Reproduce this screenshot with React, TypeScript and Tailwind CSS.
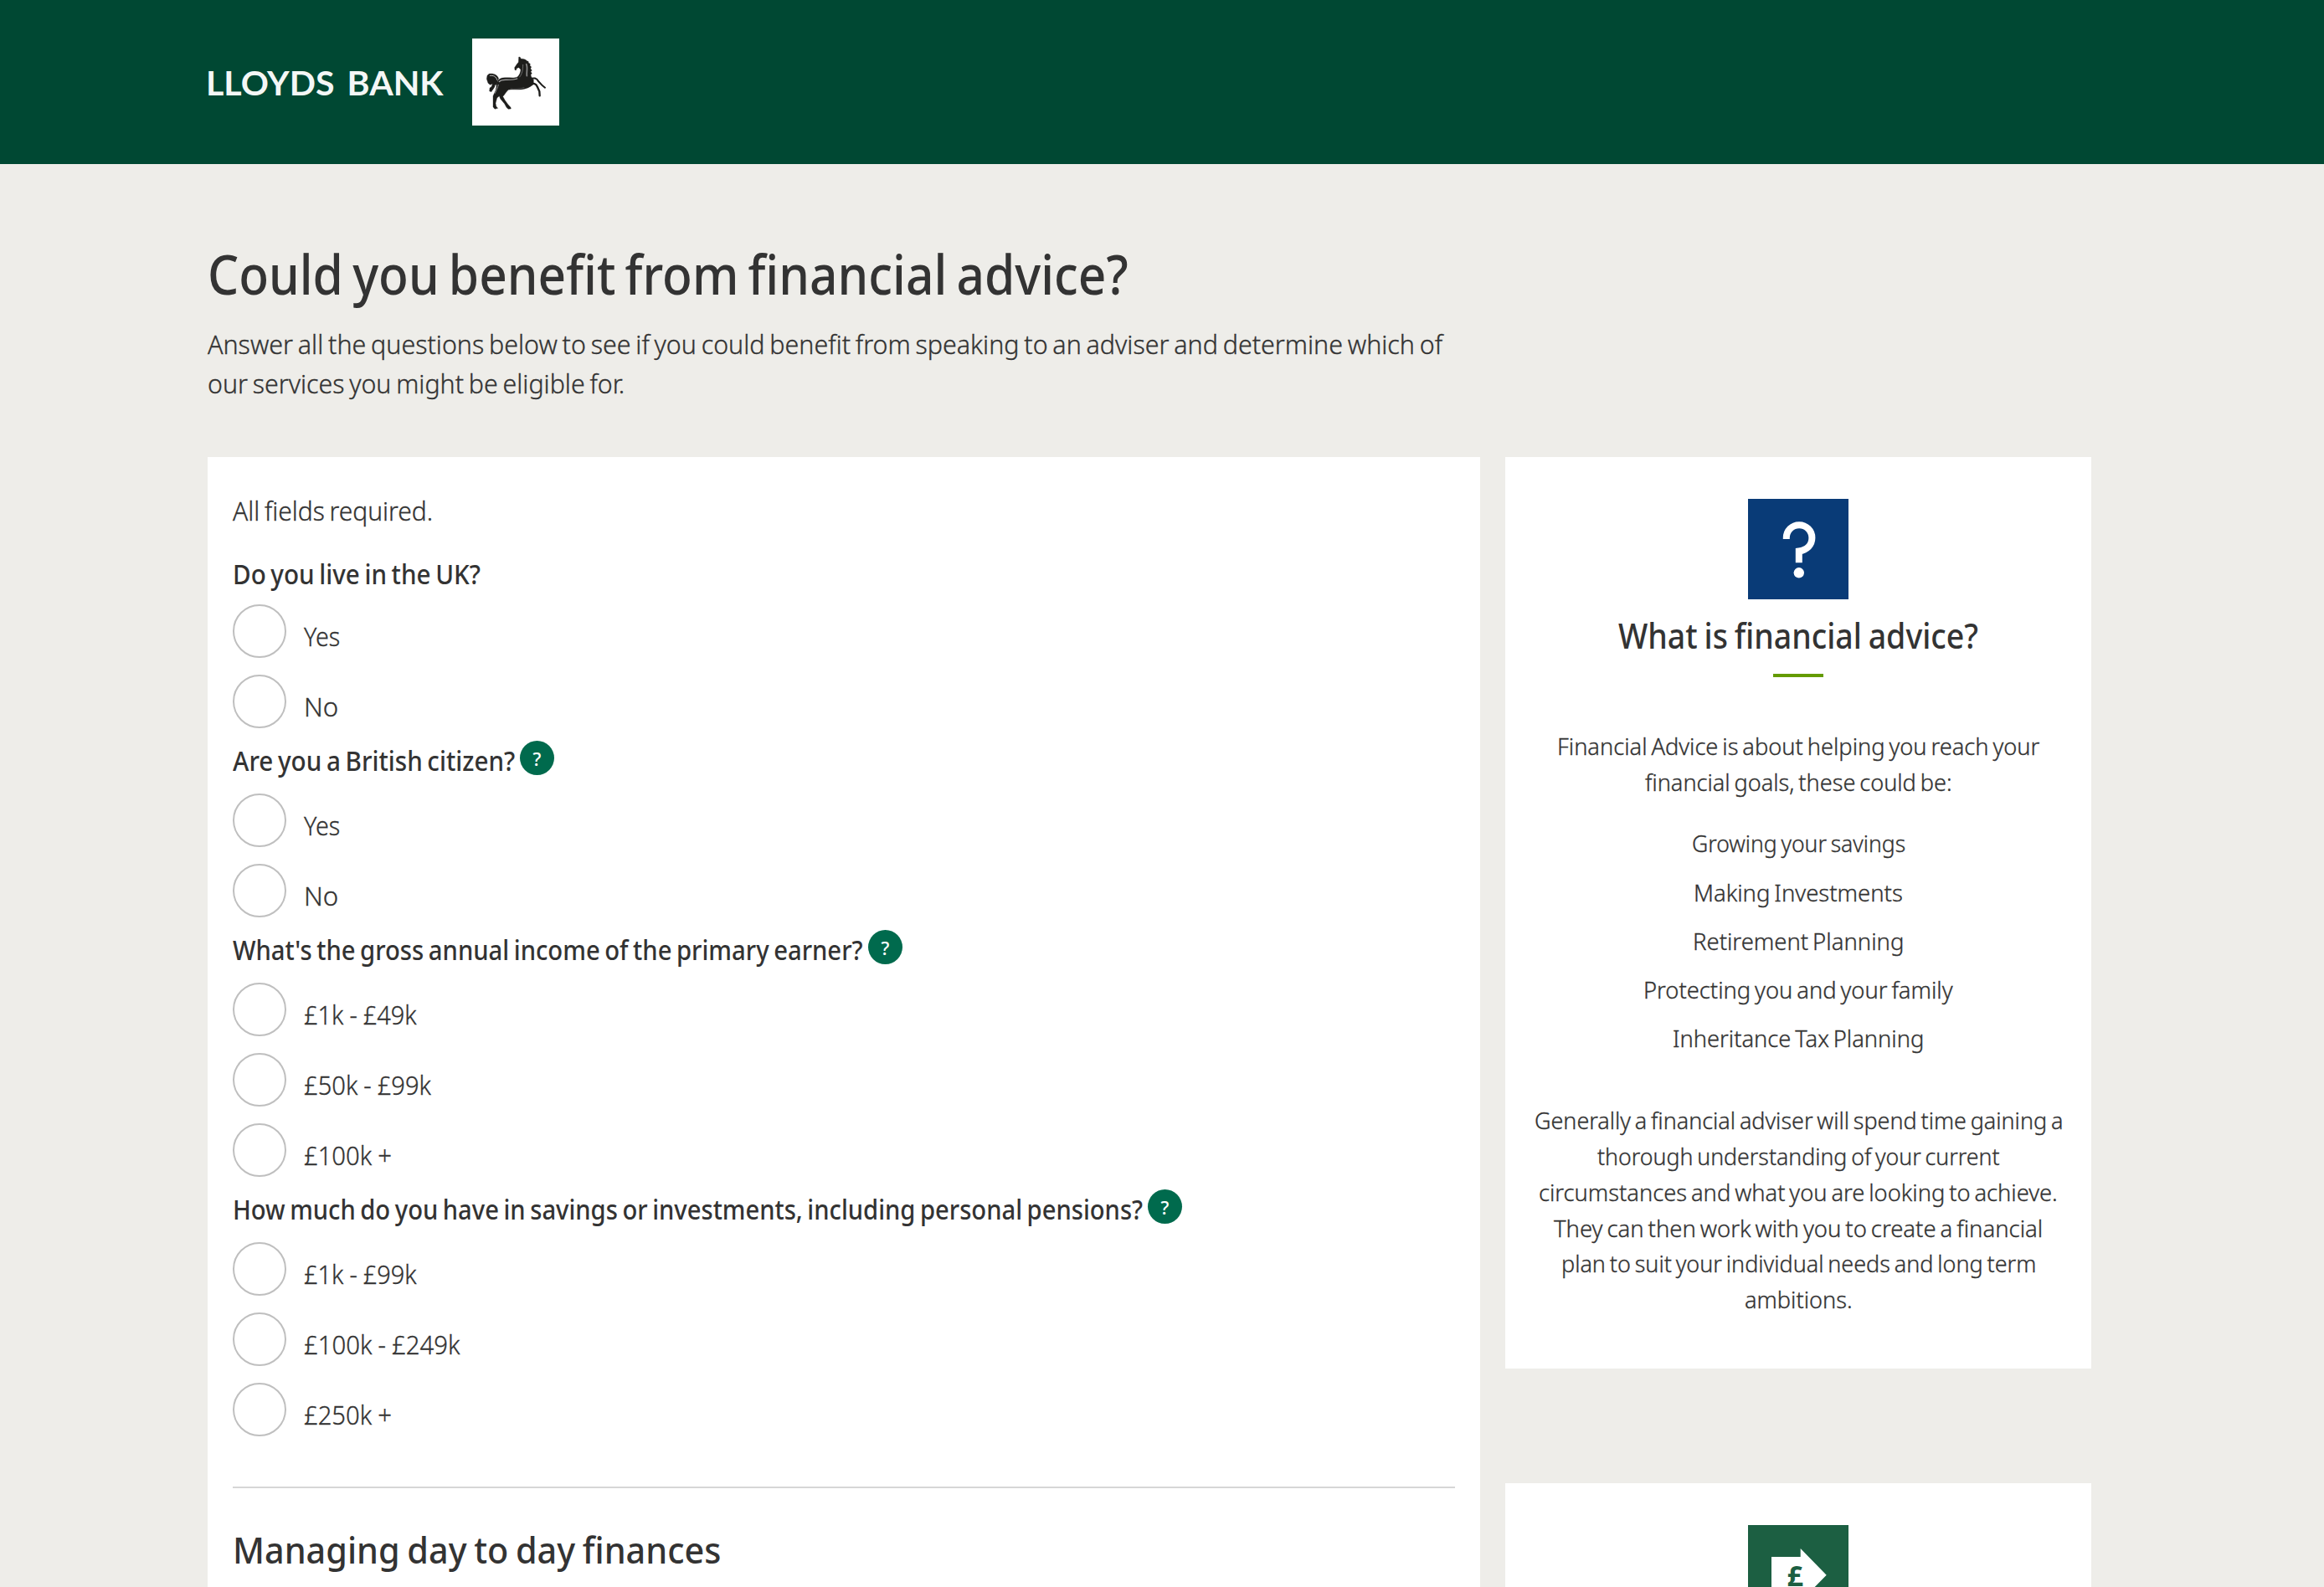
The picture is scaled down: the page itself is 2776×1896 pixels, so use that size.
import { useLayoutEffect, useRef, useState } from 'react';

/** Single line of text, condensed horizontally so that it takes up a given width. */
function Fit({ w, children }: { w: number; children: string }) {
  const ref = useRef<HTMLSpanElement>(null);
  const [scale, setScale] = useState(0.92);
  useLayoutEffect(() => {
    const measure = () => {
      if (ref.current) setScale(w / ref.current.offsetWidth);
    };
    measure();
    document.fonts.ready.then(measure);
  }, [w]);
  return (
    <span className="block" style={{ width: w }}>
      <span
        ref={ref}
        className="inline-block origin-left whitespace-nowrap"
        style={{ transform: `scaleX(${scale})` }}
      >
        {children}
      </span>
    </span>
  );
}

function Horse() {
  return (
    <svg viewBox="42 30 312 312" className="size-[104px] bg-white">
      <g fill="#1d1d1b" stroke="#1d1d1b" strokeLinejoin="round" strokeLinecap="round">
        <path
          strokeWidth="1"
          d="M209 97L213 96L217 103C226 102 235 106 240 112L243 111L244 117L250 121L249 127L254 132L251 138L256 144L252 149L256 155L252 160L254 168L262 178L262 194C248 205 236 210 222 212C206 215 186 211 172 214C164 220 160 230 152 238L160 252L171 267L180 277L181 282L171 283L165 277L158 264L143 246L139 236L131 243L126 262L128 273L134 280L123 283L117 275L117 256L117 236L126 216L131 195C131 182 138 173 152 171C172 168 190 174 204 168C212 161 216 150 216 141L209 134L201 137L200 143L195 143L194 134L202 122L208 115Z"
        />
        <path fill="none" strokeWidth="6" d="M250 176C262 169 274 172 279 183L294 199L303 206" />
        <path fill="none" strokeWidth="7" d="M250 196C262 188 271 192 276 204L283 220L284 235" />
        <path
          strokeWidth="1"
          d="M137 174C132 160 118 154 102 157L96 163L94 175L99 190L106 196L115 193L111 203L105 207L104 219L112 221L122 211L131 196L133 181Z"
        />
      </g>
      <g fill="none" strokeLinecap="round">
        <path stroke="#dddddd" strokeWidth="2.5" d="M106 163C118 161 129 167 131 178" />
        <path stroke="#ffffff" strokeWidth="4" d="M126 198C126 210 119 212 114 220" />
        <path stroke="#a9a9a9" strokeWidth="4" d="M139 185C145 177 154 178 166 178C180 178 194 178 203 174" />
        <path stroke="#8a8a8a" strokeWidth="5" d="M236 122C242 134 236 150 238 164" />
        <path stroke="#6a6a6a" strokeWidth="3" d="M224 124C224 140 222 156 212 168" />
        <path stroke="#666666" strokeWidth="2" d="M180 210C196 212 212 211 228 206" />
        <path stroke="#8a8a8a" strokeWidth="3" d="M136 196C134 206 128 216 124 226" />
      </g>
    </svg>
  );
}

function Radio({ label, w }: { label: string; w: number }) {
  return (
    <label className="flex h-16 items-start gap-5">
      <span className="size-16 shrink-0 rounded-full border-2 border-[#bfbfbf] bg-white" />
      <span className="ml-px mt-3.5 leading-[48px] [word-spacing:-0.02em]">
        <Fit w={w}>{label}</Fit>
      </span>
    </label>
  );
}

type Option = { label: string; w: number };

function Question({ title, w, options }: { title: string; w: number; options: Option[] }) {
  return (
    <fieldset>
      <div className="flex h-[78px] items-start gap-1.5 pt-[15px]">
        <div className="font-medium leading-[48px] [-webkit-text-stroke:0]">
          <Fit w={w}>{title}</Fit>
        </div>
        <span className="flex size-[41px] items-center justify-center rounded-full bg-[#006a4d] text-[22px] font-medium leading-none text-white [-webkit-text-stroke:0]">
          ?
        </span>
      </div>
      <div className="flex flex-col gap-5">
        {options.map((o) => (
          <Radio key={o.label} {...o} />
        ))}
      </div>
    </fieldset>
  );
}

const goals: Option[] = [
  { label: 'Growing your savings', w: 255 },
  { label: 'Making Investments', w: 250 },
  { label: 'Retirement Planning', w: 252 },
  { label: 'Protecting you and your family', w: 370 },
  { label: 'Inheritance Tax Planning', w: 300 },
];

const about: Option[] = [
  { label: 'Generally a financial adviser will spend time gaining a', w: 631 },
  { label: 'thorough understanding of your current', w: 481 },
  { label: 'circumstances and what you are looking to achieve.', w: 620 },
  { label: 'They can then work with you to create a financial', w: 584 },
  { label: 'plan to suit your individual needs and long term', w: 567 },
  { label: 'ambitions.', w: 129 },
];

export default function App() {
  return (
    <div className="h-[1896px] w-full overflow-hidden bg-[#eeede9] font-['Noto_Sans',sans-serif] text-[32px] font-light text-[#333333] [-webkit-text-stroke:0.35px] [word-spacing:-0.07em]">
      <header className="flex h-[196px] items-start bg-[#004833] pl-[248px] pt-[46px]">
        <svg width="316" height="104" viewBox="0 0 316 104">
          <text
            x="-2"
            y="67.5"
            textLength="283.5"
            lengthAdjust="spacingAndGlyphs"
            fill="#f4f7f6"
            className="font-['Lato',sans-serif] text-[41px] font-bold [-webkit-text-stroke:0] [word-spacing:5px]"
          >
            LLOYDS BANK
          </text>
        </svg>
        <Horse />
      </header>

      <main className="pl-[248px] pt-[85px]">
        <h1 className="text-[66px] font-medium leading-[90px] [-webkit-text-stroke:0] [word-spacing:-4.5px]">
          <Fit w={1100}>Could you benefit from financial advice?</Fit>
        </h1>
        <div className="mt-4 leading-[47px]">
          <Fit w={1475}>
            Answer all the questions below to see if you could benefit from speaking to an adviser and determine which of
          </Fit>
          <Fit w={498}>our services you might be eligible for.</Fit>
        </div>

        <div className="mt-[65px] flex items-start gap-[30px]">
          <section className="h-[1400px] w-[1520px] bg-white px-[30px] pt-10">
            <p className="leading-[48px]">
              <Fit w={239}>All fields required.</Fit>
            </p>
            <fieldset className="mt-7">
              <div className="mb-3 font-medium leading-[48px] [-webkit-text-stroke:0]">
                <Fit w={296}>Do you live in the UK?</Fit>
              </div>
              <div className="flex flex-col gap-5">
                <Radio label="Yes" w={43} />
                <Radio label="No" w={41} />
              </div>
            </fieldset>
            <Question
              title="Are you a British citizen?"
              w={337}
              options={[
                { label: 'Yes', w: 43 },
                { label: 'No', w: 41 },
              ]}
            />
            <Question
              title="What's the gross annual income of the primary earner?"
              w={753}
              options={[
                { label: '£1k - £49k', w: 135 },
                { label: '£50k - £99k', w: 152 },
                { label: '£100k +', w: 105 },
              ]}
            />
            <Question
              title="How much do you have in savings or investments, including personal pensions?"
              w={1087}
              options={[
                { label: '£1k - £99k', w: 135 },
                { label: '£100k - £249k', w: 186 },
                { label: '£250k +', w: 105 },
              ]}
            />
            <hr className="mt-[60px] h-0.5 border-0 bg-[#d6d6d6]" />
            <h2 className="mt-[43px] text-[44px] font-medium leading-[60px] [-webkit-text-stroke:0]">
              <Fit w={583}>Managing day to day finances</Fit>
            </h2>
          </section>

          <aside className="flex w-[700px] flex-col gap-[137px]">
            <section className="flex h-[1089px] flex-col items-center bg-white pt-[50px] text-[28px] leading-[42.7px]">
              <svg viewBox="0 0 120 120" className="size-[120px] bg-[#093b77]">
                <path
                  d="M45.8 48V46.5A15.3 15.3 0 0 1 76.4 46.5C76.4 55 70.5 61 60.8 62.5V76.2"
                  fill="none"
                  stroke="#ffffff"
                  strokeWidth="8"
                />
                <circle cx="60.8" cy="88.3" r="6.2" fill="#ffffff" />
              </svg>
              <h2 className="mt-[14px] text-[42px] font-medium leading-[58px] [-webkit-text-stroke:0]">
                <Fit w={430}>What is financial advice?</Fit>
              </h2>
              <div className="mt-[17px] h-1 w-[60px] bg-[#649b00]" />
              <div className="mt-[61px] flex flex-col items-center">
                <Fit w={576}>Financial Advice is about helping you reach your</Fit>
                <Fit w={367}>financial goals, these could be:</Fit>
              </div>
              <ul className="mt-[31px] flex flex-col items-center gap-[15.4px]">
                {goals.map((g) => (
                  <li key={g.label}>
                    <Fit w={g.w}>{g.label}</Fit>
                  </li>
                ))}
              </ul>
              <div className="mt-[56px] flex flex-col items-center">
                {about.map((l) => (
                  <Fit key={l.label} w={l.w}>
                    {l.label}
                  </Fit>
                ))}
              </div>
            </section>

            <section className="flex h-[300px] flex-col items-center bg-white pt-[50px]">
              <svg viewBox="0 0 120 120" className="size-[120px] bg-[#1c5f42]">
                <path d="M28 38H62.7V28L93.7 59.7L62.7 91.4V81.4H28Z" fill="#ffffff" />
                <text
                  x="56.3"
                  y="72.7"
                  textAnchor="middle"
                  fill="#1c5f42"
                  className="font-['Noto_Sans',sans-serif] text-[34px] font-bold [-webkit-text-stroke:0]"
                >
                  £
                </text>
              </svg>
            </section>
          </aside>
        </div>
      </main>
    </div>
  );
}
